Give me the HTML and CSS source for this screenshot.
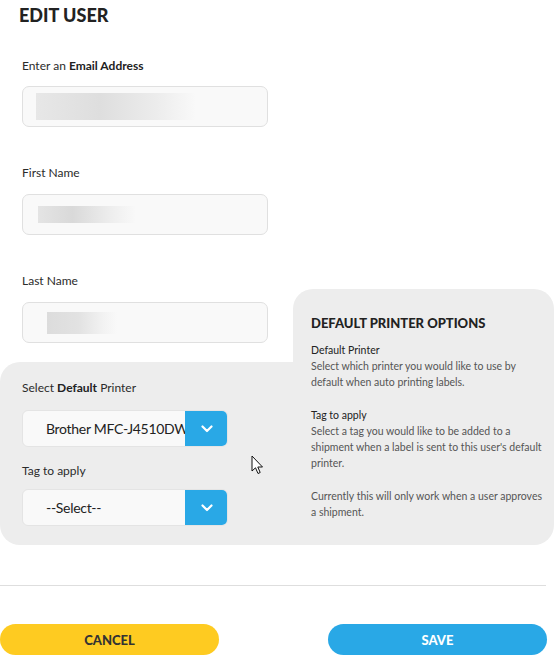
FILE: index.html
```html
<!DOCTYPE html>
<html>
<head>
<meta charset="utf-8">
<link rel="stylesheet" href="styles.css">
</head>
<body>
<div class="page">
  <h1 class="title">EDIT USER</h1>
  <div class="main">
    <div class="left">
      <div class="fields">
        <div class="field first">
          <div class="label">Enter an <b>Email Address</b></div>
          <div class="input"><span class="blur blur-email"></span></div>
        </div>
        <div class="field">
          <div class="label">First Name</div>
          <div class="input"><span class="blur blur-first"></span></div>
        </div>
        <div class="field">
          <div class="label">Last Name</div>
          <div class="input"><span class="blur blur-last"></span></div>
        </div>
      </div>
      <div class="printer-box">
        <div class="label">Select <b>Default</b> Printer</div>
        <div class="select">
          <div class="select-value">Brother MFC-J4510DW</div>
          <div class="select-btn">
            <svg width="12" height="8" viewBox="0 0 12 8"><path d="M1.5 1.5 L6 6 L10.5 1.5" fill="none" stroke="#fff" stroke-width="2.2" stroke-linecap="round" stroke-linejoin="round"/></svg>
          </div>
        </div>
        <div class="label label-tag">Tag to apply</div>
        <div class="select">
          <div class="select-value">--Select--</div>
          <div class="select-btn">
            <svg width="12" height="8" viewBox="0 0 12 8"><path d="M1.5 1.5 L6 6 L10.5 1.5" fill="none" stroke="#fff" stroke-width="2.2" stroke-linecap="round" stroke-linejoin="round"/></svg>
          </div>
        </div>
        <svg class="cursor" width="13" height="20" viewBox="0 0 13 20"><path d="M1 1 L1 16 L4.5 12.8 L7 18.5 L9.2 17.5 L6.8 12 L11.5 12 Z" fill="#fff" stroke="#111" stroke-width="1" stroke-linejoin="round"/></svg>
      </div>
    </div>
    <div class="info">
      <h2 class="info-title">DEFAULT PRINTER OPTIONS</h2>
      <p class="info-text"><span class="info-head">Default Printer</span><br>Select which printer you would like to use by<br>default when auto printing labels.</p>
      <p class="info-text"><span class="info-head">Tag to apply</span><br>Select a tag you would like to be added to a<br>shipment when a label is sent to this user's default<br>printer.</p>
      <p class="info-text">Currently this will only work when a user approves<br>a shipment.</p>
    </div>
  </div>
  <div class="divider"></div>
  <div class="actions">
    <button class="btn btn-cancel">CANCEL</button>
    <button class="btn btn-save">SAVE</button>
  </div>
</div>
</body>
</html>
```

FILE: styles.css
```css
* { box-sizing: border-box; }
html, body { margin: 0; padding: 0; background: #fff; }
body {
  font-family: Lato, "Liberation Sans", sans-serif;
  color: #2b2b2b;
  width: 554px;
  overflow: hidden;
}
.page { width: 554px; }
.title {
  margin: 0;
  padding: 4px 0 0 19px;
  font-size: 18px;
  line-height: 22px;
  font-weight: 900;
  color: #222;
  letter-spacing: 0;
}
.main {
  display: flex;
  align-items: flex-end;
}
.left { width: 293px; }
.fields { padding-left: 22px; padding-top: 32px; }
.field { margin-bottom: 38px; }
.field:last-child { margin-bottom: 19px; }
.label {
  font-size: 12px;
  line-height: 16px;
  color: #2b2b2b;
}
.label b { font-weight: 700; color: #222; }
.input {
  margin-top: 13px;
  width: 246px;
  height: 41px;
  border: 1px solid #e0e0e0;
  border-radius: 7px;
  background: #f9f9f9;
  position: relative;
  display: flex;
  align-items: center;
}
.field.first .input { margin-top: 12px; }
.blur { display: block; }
.blur-email {
  margin-left: 13px;
  width: 160px;
  height: 27px;
  background: linear-gradient(90deg, #e7e7e7 0%, #dedede 40%, #ececec 75%, #f9f9f9 100%);
}
.blur-first {
  margin-left: 15px;
  width: 98px;
  height: 17px;
  background: linear-gradient(90deg, #e4e4e4 0%, #d9d9d9 35%, #eeeeee 75%, #f9f9f9 100%);
}
.blur-last {
  margin-left: 24px;
  width: 70px;
  height: 22px;
  background: linear-gradient(90deg, #dcdcdc 0%, #e2e2e2 45%, #f2f2f2 80%, #f9f9f9 100%);
}
.printer-box {
  position: relative;
  background: #ededed;
  border-radius: 20px 0 0 20px;
  height: 183px;
  padding: 18px 0 0 22px;
}
.label-tag { margin-top: 16px; }
.select {
  margin-top: 14px;
  width: 206px;
  height: 37px;
  display: flex;
  border-radius: 6px;
  overflow: hidden;
  border: 1px solid #e4e4e4;
  background: #f9f9f9;
}
.label-tag + .select { margin-top: 10px; }
.select-value {
  flex: 1;
  min-width: 0;
  white-space: nowrap;
  padding-left: 23px;
  font-size: 14px;
  letter-spacing: -0.3px;
  line-height: 35px;
  color: #222;
}
.select-btn {
  width: 43px;
  flex: none;
  margin: -1px -1px -1px 0;
  background: #29a8e6;
  display: flex;
  align-items: center;
  justify-content: center;
}
.cursor {
  position: absolute;
  left: 251px;
  top: 93px;
}
.info {
  flex: 1;
  height: 256px;
  background: #ededed;
  border-radius: 20px 20px 20px 0;
  padding: 26px 10px 0 18px;
}
.info-title {
  margin: 0 0 11px;
  font-size: 13px;
  line-height: 16px;
  font-weight: 900;
  color: #222;
}
.info-text {
  margin: 0 0 17px;
  font-size: 10.5px;
  line-height: 16px;
  color: #555;
}
.info-head { color: #222; }
.divider {
  margin-top: 40px;
  width: 546px;
  height: 1px;
  background: #dedede;
}
.actions {
  display: flex;
  justify-content: space-between;
  width: 547px;
  margin-top: 38px;
}
.btn {
  width: 219px;
  height: 31px;
  border: 0;
  border-radius: 16px;
  font-family: Lato, "Liberation Sans", sans-serif;
  font-size: 13px;
  font-weight: 900;
  cursor: pointer;
  padding: 0;
}
.btn-cancel { background: #fecb21; color: #333; }
.btn-save { background: #29a8e6; color: #fff; }
```
